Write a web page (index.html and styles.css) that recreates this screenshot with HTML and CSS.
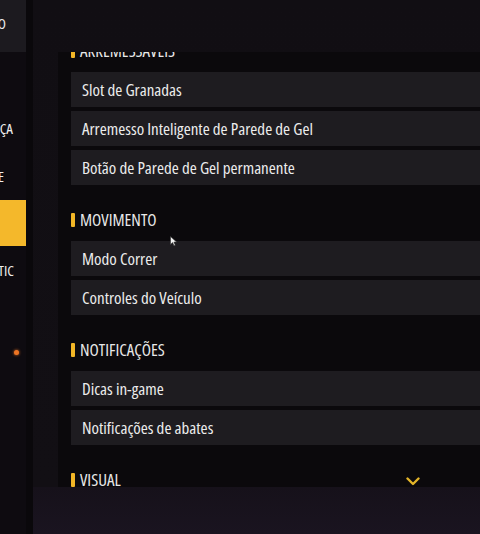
FILE: index.html
```html
<!DOCTYPE html>
<html lang="pt">
<head>
<meta charset="utf-8">
<title>Configurações</title>
<link rel="stylesheet" href="styles.css">
</head>
<body>
<div class="app">
  <nav class="sidebar">
    <div class="tab tab-top"><span class="tab-label end-5">BÁSICO</span></div>
    <div class="tab tab-plain"><span class="tab-label end-12">PRESENÇA</span></div>
    <div class="tab tab-plain tab-short"><span class="tab-label end-3">REDE</span></div>
    <div class="tab tab-active"><span class="tab-label end-far">CONTROLES</span></div>
    <div class="tab tab-plain tab-short"><span class="tab-label end-13">AUTOMÁTIC</span></div>
    <div class="tab tab-dot"><span class="dot"></span></div>
  </nav>
  <main class="stage">
    <section class="panel">
      <div class="list">
        <div class="group">
          <h2 class="group-title">ARREMESSÁVEIS</h2>
          <div class="rows">
            <div class="row">Slot de Granadas</div>
            <div class="row">Arremesso Inteligente de Parede de Gel</div>
            <div class="row">Botão de Parede de Gel permanente</div>
          </div>
        </div>
        <div class="group">
          <h2 class="group-title">MOVIMENTO</h2>
          <div class="rows">
            <div class="row">Modo Correr</div>
            <div class="row">Controles do Veículo</div>
          </div>
        </div>
        <div class="group">
          <h2 class="group-title">NOTIFICAÇÕES</h2>
          <div class="rows">
            <div class="row">Dicas in-game</div>
            <div class="row">Notificações de abates</div>
          </div>
        </div>
        <div class="group">
          <h2 class="group-title">VISUAL</h2>
        </div>
      </div>
      <svg class="more" width="14" height="9" viewBox="0 0 14 9"><path d="M1.5 1.5 L7 7 L12.5 1.5" fill="none" stroke="#e3b429" stroke-width="2.4" stroke-linecap="round" stroke-linejoin="round"/></svg>
      <svg class="cursor" width="8" height="11" viewBox="0 0 8 11"><path d="M0.5 0.5 L0.5 8.5 L2.6 6.6 L4 9.8 L5.3 9.2 L3.9 6.1 L6.6 6.1 Z" fill="#f2f2f2" stroke="#333" stroke-width="0.6"/></svg>
    </section>
  </main>
</div>
</body>
</html>
```

FILE: styles.css
```css
* { box-sizing: border-box; }
html, body { margin: 0; padding: 0; }
body {
  width: 480px;
  height: 534px;
  overflow: hidden;
  background: #0f0c11;
  font-family: "Open Sans", "Liberation Sans", sans-serif;
  font-stretch: 80%;
  color: #ececec;
}
.app {
  display: flex;
  height: 534px;
}
.sidebar {
  width: 26px;
  flex: 0 0 26px;
  display: flex;
  flex-direction: column;
  background: #0e0b10;
  overflow: hidden;
}
.tab {
  display: flex;
  align-items: center;
  justify-content: flex-end;
  white-space: nowrap;
  overflow: hidden;
  font-size: 15px;
  font-weight: 500;
  color: #ededed;
}
.tab-top { height: 52px; background: #1c1a1f; padding-bottom: 6px; }
.tab-plain { height: 48px; margin-top: 28px; }
.tab-short { margin-top: 0; }
.tab-plain:nth-child(2) { margin-top: 52px; }
.tab-active { height: 46px; background: #f4b82b; color: #1a1208; }
.tab-dot { height: 20px; margin-top: 48px; }
.tab-label { flex: 0 0 auto; }
.end-3 { padding-right: 22px; }
.end-5 { padding-right: 20px; }
.end-12 { padding-right: 13px; }
.end-13 { padding-right: 12px; }
.end-far { padding-right: 30px; }
.dot {
  width: 5px;
  height: 5px;
  border-radius: 50%;
  background: #ec7424;
  box-shadow: 0 0 3px #ec7424;
  margin-right: 7px;
}
.stage {
  flex: 1;
  display: flex;
  flex-direction: column;
  padding-top: 52px;
  padding-left: 25px;
  border-left: 7px solid #0a080b;
  background: linear-gradient(to bottom, #110e13 0, #120f14 487px, #16111a 487px, #1a1420 534px);
}
.panel {
  position: relative;
  height: 435px;
  background: #0b090c;
  overflow: hidden;
  padding-left: 13px;
}
.list {
  margin-top: -8px;
  display: flex;
  flex-direction: column;
  gap: 28px;
}
.group-title {
  margin: 0;
  height: 14px;
  display: flex;
  align-items: center;
  gap: 5px;
  font-size: 17px;
  font-weight: 500;
  color: #e8e8e8;
  line-height: 14px;
}
.group-title::before {
  content: "";
  width: 4px;
  height: 14px;
  background: #f2b626;
  border-radius: 1px;
  flex: 0 0 4px;
}
.rows {
  margin-top: 14px;
  display: flex;
  flex-direction: column;
  gap: 4px;
}
.row {
  height: 35px;
  display: flex;
  align-items: center;
  padding-left: 11px;
  background: #1e1c20;
  font-size: 17px;
  font-weight: 500;
  color: #ececec;
  white-space: nowrap;
}
.more {
  position: absolute;
  left: 348px;
  top: 425px;
}
.cursor {
  position: absolute;
  left: 112px;
  top: 184px;
}
```
